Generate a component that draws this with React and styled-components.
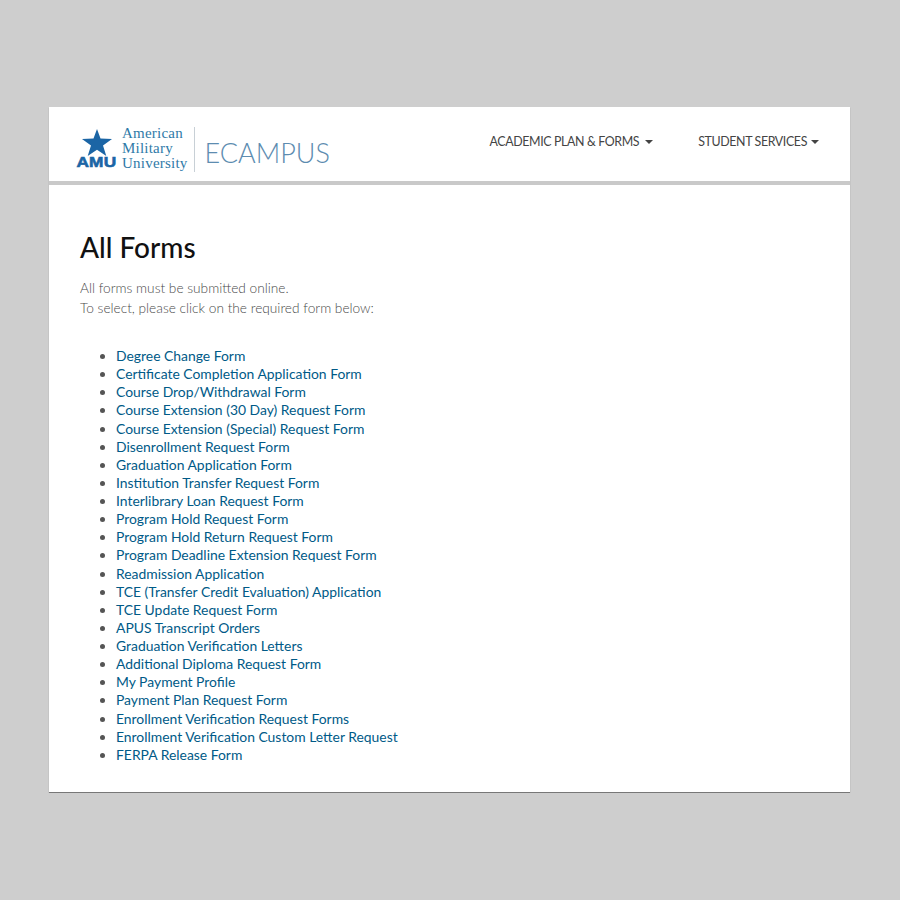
import React from 'react';
import styled, { createGlobalStyle } from 'styled-components';

const GlobalStyle = createGlobalStyle`
  html, body {
    margin: 0;
    padding: 0;
    background: #cecece;
    font-family: "Lato", "Liberation Sans", sans-serif;
  }
`;

const Page = styled.div`
  width: 801px;
  margin-left: 49px;
  padding-top: 107px;
`;

const Card = styled.div`
  background: #fff;
  border-bottom: 1px solid #777;
  box-shadow: 0 1px 1px rgba(0, 0, 0, 0.25);
`;

const Header = styled.header`
  height: 74px;
  display: flex;
  justify-content: space-between;
  border-bottom: 4px solid #c9c9c9;
`;

const Logo = styled.div`
  display: flex;
  align-items: flex-start;
  padding: 18px 0 0 27px;
`;

const Mark = styled.div`
  width: 41px;
  margin-top: 4px;
  display: flex;
  flex-direction: column;
  align-items: center;
`;

const Amu = styled.span`
  font-family: "Liberation Sans", sans-serif;
  font-size: 15px;
  font-weight: 700;
  line-height: 12px;
  letter-spacing: 0.2px;
  color: #1b65a5;
  -webkit-text-stroke: 0.6px #1b65a5;
  transform: scaleX(1.15);
`;

const School = styled.div`
  margin: 1px 0 0 5px;
  font-family: "Liberation Serif", serif;
  font-size: 15px;
  letter-spacing: 0.22px;
  line-height: 15px;
  color: #2f7aa8;
`;

const Rule = styled.div`
  width: 1px;
  height: 45px;
  margin: 2px 10px 0 6px;
  background: #c8d0d6;
`;

const Ecampus = styled.div`
  font-size: 27px;
  font-weight: 300;
  line-height: 30px;
  margin-top: 13px;
  color: #5d8cb0;
`;

const Nav = styled.nav`
  display: flex;
  gap: 45px;
  padding: 26px 31px 0 0;
`;

const NavItem = styled.a`
  display: flex;
  align-items: center;
  height: 17px;
  gap: ${(p) => p.$gap}px;
  font-size: 12.4px;
  letter-spacing: -0.37px;
  color: #444;
`;

const Caret = styled.span`
  width: 0;
  height: 0;
  border-left: 4px solid transparent;
  border-right: 4px solid transparent;
  border-top: 4px solid #444;
`;

const Main = styled.main`
  padding: 44px 31px 28px;
`;

const Title = styled.h1`
  margin: 0 0 13px;
  font-size: 28px;
  line-height: 36px;
  font-weight: 500;
  color: #111;
`;

const Intro = styled.p`
  margin: 0 0 29px;
  font-size: 13.7px;
  line-height: 20px;
  font-weight: 300;
  color: #4a4a4a;
`;

const FormList = styled.ul`
  margin: 0;
  padding-left: 36px;
  color: #555;
`;

const FormItem = styled.li`
  font-size: 13.9px;
  line-height: 18.13px;
`;

const FormLink = styled.a`
  color: #005a87;
  text-decoration: none;
`;

const forms = [
  'Degree Change Form',
  'Certificate Completion Application Form',
  'Course Drop/Withdrawal Form',
  'Course Extension (30 Day) Request Form',
  'Course Extension (Special) Request Form',
  'Disenrollment Request Form',
  'Graduation Application Form',
  'Institution Transfer Request Form',
  'Interlibrary Loan Request Form',
  'Program Hold Request Form',
  'Program Hold Return Request Form',
  'Program Deadline Extension Request Form',
  'Readmission Application',
  'TCE (Transfer Credit Evaluation) Application',
  'TCE Update Request Form',
  'APUS Transcript Orders',
  'Graduation Verification Letters',
  'Additional Diploma Request Form',
  'My Payment Profile',
  'Payment Plan Request Form',
  'Enrollment Verification Request Forms',
  'Enrollment Verification Custom Letter Request',
  'FERPA Release Form',
];

const App = () => {
  return (
    <>
      <GlobalStyle />
      <Page>
        <Card>
          <Header>
            <Logo>
              <Mark>
                <svg width="30" height="27" viewBox="0 0 30 27">
                  <polygon
                    fill="#1b65a5"
                    points="15,0 18.5,9.6 30,10 21,16.4 24.3,27 15,20.8 5.7,27 9,16.4 0,10 11.5,9.6"
                  />
                </svg>
                <Amu>AMU</Amu>
              </Mark>
              <School>
                American<br />Military<br />University
              </School>
              <Rule />
              <Ecampus>ECAMPUS</Ecampus>
            </Logo>
            <Nav>
              <NavItem $gap={6}>ACADEMIC PLAN &amp; FORMS <Caret /></NavItem>
              <NavItem $gap={4}>STUDENT SERVICES <Caret /></NavItem>
            </Nav>
          </Header>
          <Main>
            <Title>All Forms</Title>
            <Intro>
              All forms must be submitted online.<br />
              To select, please click on the required form below:
            </Intro>
            <FormList>
              {forms.map((f) => (
                <FormItem key={f}><FormLink href="#">{f}</FormLink></FormItem>
              ))}
            </FormList>
          </Main>
        </Card>
      </Page>
    </>
  );
};

export default App;
